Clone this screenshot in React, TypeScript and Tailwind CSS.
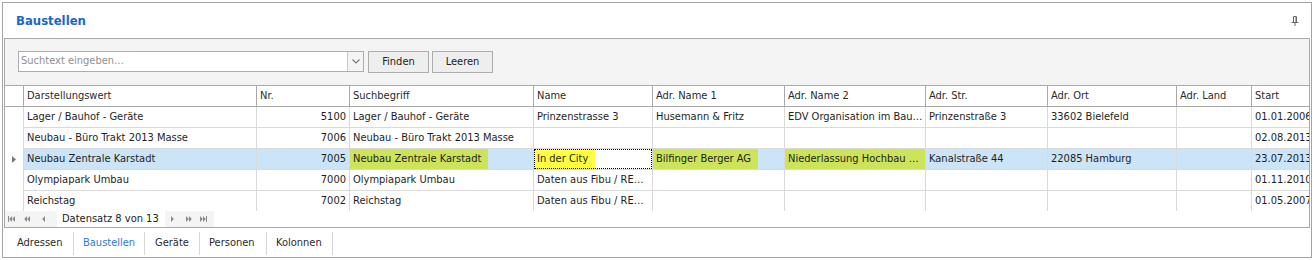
import React from 'react';

type Cell = { text?: string; hl?: 'green' | 'yellow'; focus?: boolean; right?: boolean };

const cols = [
  { label: 'Darstellungswert', w: 'w-[233px]' },
  { label: 'Nr.', w: 'w-[93px]' },
  { label: 'Suchbegriff', w: 'w-[184px]' },
  { label: 'Name', w: 'w-[119px]' },
  { label: 'Adr. Name 1', w: 'w-[132px]' },
  { label: 'Adr. Name 2', w: 'w-[141px]' },
  { label: 'Adr. Str.', w: 'w-[122px]' },
  { label: 'Adr. Ort', w: 'w-[129px]' },
  { label: 'Adr. Land', w: 'w-[75px]' },
  { label: 'Start', w: 'w-[80px]' },
];

const tabs = [
  { label: 'Adressen', w: 'w-[68px]', pl: 'pl-[11px]' },
  { label: 'Baustellen', w: 'w-[71px]', pl: 'pl-[9px]' },
  { label: 'Geräte', w: 'w-[55px]', pl: 'pl-[10px]' },
  { label: 'Personen', w: 'w-[67px]', pl: 'pl-[9px]' },
  { label: 'Kolonnen', w: 'w-[66px]', pl: 'pl-[9px]' },
];

const rows: { selected?: boolean; cells: Cell[] }[] = [
  {
    cells: [
      { text: 'Lager / Bauhof - Geräte' },
      { text: '5100', right: true },
      { text: 'Lager / Bauhof - Geräte' },
      { text: 'Prinzenstrasse 3' },
      { text: 'Husemann & Fritz' },
      { text: 'EDV Organisation im Bau…' },
      { text: 'Prinzenstraße 3' },
      { text: '33602 Bielefeld' },
      {},
      { text: '01.01.2006' },
    ],
  },
  {
    cells: [
      { text: 'Neubau - Büro Trakt 2013 Masse' },
      { text: '7006', right: true },
      { text: 'Neubau - Büro Trakt 2013 Masse' },
      {},
      {},
      {},
      {},
      {},
      {},
      { text: '02.08.2013' },
    ],
  },
  {
    selected: true,
    cells: [
      { text: 'Neubau Zentrale Karstadt' },
      { text: '7005', right: true },
      { text: 'Neubau Zentrale Karstadt', hl: 'green' },
      { text: 'In der City', hl: 'yellow', focus: true },
      { text: 'Bilfinger Berger AG', hl: 'green' },
      { text: 'Niederlassung Hochbau …', hl: 'green' },
      { text: 'Kanalstraße 44' },
      { text: '22085 Hamburg' },
      {},
      { text: '23.07.2013' },
    ],
  },
  {
    cells: [
      { text: 'Olympiapark Umbau' },
      { text: '7000', right: true },
      { text: 'Olympiapark Umbau' },
      { text: 'Daten aus Fibu / RE…' },
      {},
      {},
      {},
      {},
      {},
      { text: '01.11.2010' },
    ],
  },
  {
    cells: [
      { text: 'Reichstag' },
      { text: '7002', right: true },
      { text: 'Reichstag' },
      { text: 'Daten aus Fibu / RE…' },
      {},
      {},
      {},
      {},
      {},
      { text: '01.05.2007' },
    ],
  },
];

function Pin() {
  return (
    <svg width="8" height="10" viewBox="0 0 8 10">
      <path d="M2.5 0.5H5.5V6" fill="none" stroke="#6b6b6b" />
      <path d="M2.5 0.5V6" stroke="#6b6b6b" />
      <rect x="4.5" y="1" width="1.5" height="5" fill="#6b6b6b" />
      <path d="M0.5 6.5H7.5" stroke="#6b6b6b" />
      <path d="M4 6.5V10" stroke="#6b6b6b" />
    </svg>
  );
}

function Chevron() {
  return (
    <svg width="8" height="5" viewBox="0 0 8 5">
      <path d="M0.5 0.5L4 4L7.5 0.5" fill="none" stroke="#7a7a7a" strokeWidth="1.2" />
    </svg>
  );
}

function NavIcon({ kind }: { kind: 'first' | 'prevPage' | 'prev' | 'next' | 'nextPage' | 'last' }) {
  const c = '#8a8a8a';
  if (kind === 'first')
    return (
      <svg width="7" height="6" viewBox="0 0 7 6">
        <rect x="0" y="0" width="1" height="6" fill={c} />
        <path d="M4 0L1.2 3L4 6Z M7 0L4.2 3L7 6Z" fill={c} />
      </svg>
    );
  if (kind === 'prevPage')
    return (
      <svg width="6" height="6" viewBox="0 0 6 6">
        <path d="M3 0L0.2 3L3 6Z M6 0L3.2 3L6 6Z" fill={c} />
      </svg>
    );
  if (kind === 'prev')
    return (
      <svg width="3" height="6" viewBox="0 0 3 6">
        <path d="M3 0L0.2 3L3 6Z" fill={c} />
      </svg>
    );
  if (kind === 'next')
    return (
      <svg width="3" height="6" viewBox="0 0 3 6">
        <path d="M0 0L2.8 3L0 6Z" fill={c} />
      </svg>
    );
  if (kind === 'nextPage')
    return (
      <svg width="6" height="6" viewBox="0 0 6 6">
        <path d="M0 0L2.8 3L0 6Z M3 0L5.8 3L3 6Z" fill={c} />
      </svg>
    );
  return (
    <svg width="7" height="6" viewBox="0 0 7 6">
      <path d="M0 0L2.8 3L0 6Z M3 0L5.8 3L3 6Z" fill={c} />
      <rect x="6" y="0" width="1" height="6" fill={c} />
    </svg>
  );
}

function RowIndicator() {
  return (
    <svg width="4" height="7" viewBox="0 0 4 7">
      <path d="M0 0L4 3.5L0 7Z" fill="#7a7a7a" />
    </svg>
  );
}

function DataCell({ cell, w }: { cell: Cell; w: string }) {
  const base = `${w} shrink-0 h-full border-r border-b border-[#dadada] relative overflow-hidden whitespace-nowrap flex items-center`;
  if (cell.hl) {
    const bg = cell.hl === 'green' ? 'bg-[#cce35a]' : 'bg-[#ffff40]';
    return (
      <div className={`${base} ${cell.focus ? 'bg-white' : ''}`}>
        <span className={`h-full flex items-center pl-[3px] pr-[7px] ${bg}`}>{cell.text}</span>
        {cell.focus && <div className="absolute inset-0 border border-dotted border-black pointer-events-none" />}
      </div>
    );
  }
  return (
    <div className={`${base} ${cell.right ? 'justify-end pr-[3px]' : 'pl-[3px]'}`}>{cell.text}</div>
  );
}

export default function App() {
  return (
    <div className="w-[1314px] h-[260px] bg-white p-[2px] font-['DejaVu_Sans_Condensed','Liberation_Sans',sans-serif] text-[11px] text-[#1e1e1e] overflow-hidden">
      <div className="h-full border border-[#a3a3a3] flex flex-col">
        {/* title */}
        <div className="h-[35px] shrink-0 flex items-center justify-between pl-[13px] pr-[12px]">
          <span className="text-[13px] font-bold text-[#1a68c4]">Baustellen</span>
          <Pin />
        </div>
        {/* inner panel */}
        <div className="h-[190px] shrink-0 mx-[1px] border border-[#a8a8a8] flex flex-col">
          {/* toolbar */}
          <div className="h-[47px] shrink-0 bg-[#f4f4f4] border-b border-[#a8a8a8] flex items-start pt-[12px] pl-[13px]">
            <div className="w-[346px] h-[21px] bg-white border border-[#abadb3] flex">
              <div className="flex-1 flex items-center pl-[2px] text-[#8f8f8f]">Suchtext eingeben…</div>
              <div className="w-[16px] border-l border-[#c8c8c8] bg-[#f4f4f4] flex items-center justify-center">
                <Chevron />
              </div>
            </div>
            <button className="ml-[4px] w-[61px] h-[22px] border border-[#acacac] bg-[#eeeeee] flex items-center justify-center text-[#222]">
              Finden
            </button>
            <button className="ml-[3px] w-[61px] h-[22px] border border-[#acacac] bg-[#eeeeee] flex items-center justify-center text-[#222]">
              Leeren
            </button>
          </div>
          {/* grid */}
          <div className="flex-1 flex flex-col overflow-hidden bg-white">
            <div className="h-[21px] shrink-0 flex border-b border-[#a8a8a8]">
              <div className="w-[19px] shrink-0 border-r border-[#a8a8a8]" />
              {cols.map((c) => (
                <div
                  key={c.label}
                  className={`${c.w} shrink-0 border-r border-[#a8a8a8] pl-[3px] flex items-center whitespace-nowrap text-[#2a2a2a]`}
                >
                  {c.label}
                </div>
              ))}
            </div>
            <div className="flex-1 overflow-hidden">
              {rows.map((r, i) => (
                <div key={i} className="h-[21px] flex">
                  <div className="w-[19px] shrink-0 h-full border-r border-[#dadada] flex items-center pl-[7px]">
                    {r.selected && <RowIndicator />}
                  </div>
                  <div className={`flex h-full ${r.selected ? 'bg-[#cce4f7]' : ''}`}>
                    {r.cells.map((cell, j) => (
                      <DataCell key={j} cell={cell} w={cols[j].w} />
                    ))}
                  </div>
                </div>
              ))}
            </div>
            {/* navigator */}
            <div className="h-[16px] shrink-0 flex bg-white">
              <div className="w-[209px] h-full flex items-center bg-[#f4f4f4]">
                <div className="ml-[3px]"><NavIcon kind="first" /></div>
                <div className="ml-[9px]"><NavIcon kind="prevPage" /></div>
                <div className="ml-[12px]"><NavIcon kind="prev" /></div>
                <div className="ml-[12px] w-[108px] h-full flex items-center pl-[5px] bg-white text-[#222]">
                  Datensatz 8 von 13
                </div>
                <div className="ml-[6px]"><NavIcon kind="next" /></div>
                <div className="ml-[12px]"><NavIcon kind="nextPage" /></div>
                <div className="ml-[8px]"><NavIcon kind="last" /></div>
              </div>
            </div>
          </div>
        </div>
        {/* tabs */}
        <div className="flex-1 flex items-start pl-[3px] pt-[4px]">
          {tabs.map((t) => (
            <div
              key={t.label}
              className={`${t.w} ${t.pl} h-[23px] shrink-0 flex items-center whitespace-nowrap border-r border-[#d6d6d6] ${
                t.label === 'Baustellen' ? 'text-[#2b7bd2]' : 'text-[#2a2a2a]'
              }`}
            >
              {t.label}
            </div>
          ))}
        </div>
      </div>
    </div>
  );
}
